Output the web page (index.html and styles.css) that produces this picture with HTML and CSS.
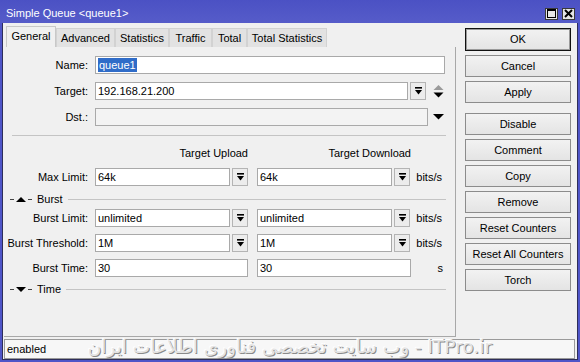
FILE: index.html
```html
<!DOCTYPE html>
<html>
<head>
<meta charset="utf-8">
<link rel="stylesheet" href="styles.css">
</head>
<body>
<div class="window">
  <div class="titlebar">
    <span class="title">Simple Queue &lt;queue1&gt;</span>
    <div class="tbtns">
      <span class="tbtn"><svg width="9" height="9" viewBox="0 0 9 9"><rect x="0.5" y="0.5" width="8" height="8" fill="none" stroke="#000" stroke-width="1"/><rect x="0" y="0" width="9" height="2" fill="#000"/></svg></span>
      <span class="tbtn"><svg width="9" height="9" viewBox="0 0 9 9"><path d="M1 1 L8 8 M8 1 L1 8" stroke="#000" stroke-width="2"/></svg></span>
    </div>
  </div>
  <div class="body">
    <div class="main">
      <div class="left">
        <div class="tabs">
          <span class="tab active t1">General</span>
          <span class="tab t2">Advanced</span>
          <span class="tab t3">Statistics</span>
          <span class="tab t4">Traffic</span>
          <span class="tab t5">Total</span>
          <span class="tab t6">Total Statistics</span>
        </div>
        <div class="panel">
          <div class="row r-first">
            <span class="lbl">Name:</span>
            <div class="inp w-name"><span class="sel">queue1</span></div>
          </div>
          <div class="row r-next">
            <span class="lbl">Target:</span>
            <div class="inp w-target">192.168.21.200</div>
            <span class="dd"><svg width="7" height="8" viewBox="0 0 7 8"><rect x="0" y="0" width="7" height="1.6" fill="#000"/><polygon points="0,3 7,3 3.5,7.5" fill="#000"/></svg></span>
            <span class="updown"><svg width="11" height="13" viewBox="0 0 11 13"><polygon points="0.5,5 10.5,5 5.5,0" fill="#9a9a9a"/><polygon points="0.5,7.5 10.5,7.5 5.5,12.5" fill="#000"/></svg></span>
          </div>
          <div class="row r-next">
            <span class="lbl">Dst.:</span>
            <div class="inp w-dst dim"></div>
            <span class="down"><svg width="11" height="6" viewBox="0 0 11 6"><polygon points="0,0 11,0 5.5,5.5" fill="#000"/></svg></span>
          </div>
          <div class="sep"></div>
          <div class="heads">
            <span class="hcol">Target Upload</span>
            <span class="hcol hdl">Target Download</span>
          </div>
          <div class="row r-max">
            <span class="lbl">Max Limit:</span>
            <div class="grp"><div class="inp w-half">64k</div><span class="dd"><svg width="7" height="8" viewBox="0 0 7 8"><rect x="0" y="0" width="7" height="1.6" fill="#000"/><polygon points="0,3 7,3 3.5,7.5" fill="#000"/></svg></span></div>
            <div class="grp g2"><div class="inp w-half">64k</div><span class="dd"><svg width="7" height="8" viewBox="0 0 7 8"><rect x="0" y="0" width="7" height="1.6" fill="#000"/><polygon points="0,3 7,3 3.5,7.5" fill="#000"/></svg></span></div>
            <span class="unit">bits/s</span>
          </div>
          <div class="section s-burst">
            <svg class="sico" width="22" height="7" viewBox="0 0 22 7"><path d="M0 3.5 H4 M18 3.5 H22" stroke="#444" stroke-width="1"/><polygon points="6,6 16,6 11,1" fill="#000"/></svg>
            <span class="stitle">Burst</span>
            <span class="sline"></span>
          </div>
          <div class="row r-b1">
            <span class="lbl">Burst Limit:</span>
            <div class="grp"><div class="inp w-half">unlimited</div><span class="dd"><svg width="7" height="8" viewBox="0 0 7 8"><rect x="0" y="0" width="7" height="1.6" fill="#000"/><polygon points="0,3 7,3 3.5,7.5" fill="#000"/></svg></span></div>
            <div class="grp g2"><div class="inp w-half">unlimited</div><span class="dd"><svg width="7" height="8" viewBox="0 0 7 8"><rect x="0" y="0" width="7" height="1.6" fill="#000"/><polygon points="0,3 7,3 3.5,7.5" fill="#000"/></svg></span></div>
            <span class="unit">bits/s</span>
          </div>
          <div class="row r-b">
            <span class="lbl">Burst Threshold:</span>
            <div class="grp"><div class="inp w-half">1M</div><span class="dd"><svg width="7" height="8" viewBox="0 0 7 8"><rect x="0" y="0" width="7" height="1.6" fill="#000"/><polygon points="0,3 7,3 3.5,7.5" fill="#000"/></svg></span></div>
            <div class="grp g2"><div class="inp w-half">1M</div><span class="dd"><svg width="7" height="8" viewBox="0 0 7 8"><rect x="0" y="0" width="7" height="1.6" fill="#000"/><polygon points="0,3 7,3 3.5,7.5" fill="#000"/></svg></span></div>
            <span class="unit">bits/s</span>
          </div>
          <div class="row r-b">
            <span class="lbl">Burst Time:</span>
            <div class="grp"><div class="inp w-full">30</div></div>
            <div class="grp g2"><div class="inp w-full2">30</div></div>
            <span class="unit">s</span>
          </div>
          <div class="section s-time">
            <svg class="sico" width="22" height="7" viewBox="0 0 22 7"><path d="M0 3.5 H4 M18 3.5 H22" stroke="#444" stroke-width="1"/><polygon points="6,1 16,1 11,6" fill="#000"/></svg>
            <span class="stitle">Time</span>
            <span class="sline"></span>
          </div>
        </div>
      </div>
      <div class="buttons">
        <span class="btn ok">OK</span>
        <span class="btn">Cancel</span>
        <span class="btn">Apply</span>
        <span class="btn gap">Disable</span>
        <span class="btn">Comment</span>
        <span class="btn">Copy</span>
        <span class="btn">Remove</span>
        <span class="btn">Reset Counters</span>
        <span class="btn">Reset All Counters</span>
        <span class="btn">Torch</span>
      </div>
    </div>
    <div class="status">enabled</div>
  </div>
  <div class="watermark" dir="rtl">ITPro.ir - وب سایت تخصصی فناوری اطلاعات ایران</div>
</div>
</body>
</html>
```
FILE: styles.css
```css
* { box-sizing: border-box; }
body {
  margin: 0;
  font-family: "Liberation Sans", Arial, sans-serif;
  font-size: 11px;
  color: #000;
  background: #fff;
}
.window {
  position: relative;
  width: 580px;
  height: 362px;
  background: #4f55c8;
  display: flex;
  flex-direction: column;
}
.titlebar {
  height: 23px;
  display: flex;
  align-items: center;
  justify-content: space-between;
  padding: 2px 5px 0 6px;
  color: #fff;
  background: linear-gradient(#4b51c4, #565cc9);
}
.title { font-size: 11px; line-height: 14px; }
.tbtns { display: flex; gap: 4px; padding-top: 2px; }
.tbtn {
  width: 13px;
  height: 12px;
  background: #e6e6e6;
  border: 1px solid #3a3a3a;
  display: flex;
  align-items: center;
  justify-content: center;
}
.body {
  flex: 1;
  margin: 0 2px 2px 2px;
  background: #f0f0f0;
  border: 1px solid #2e2e5a;
  border-top: 0;
  display: flex;
  flex-direction: column;
}
.main {
  display: flex;
  height: 314px;
  padding-left: 1px;
}
.left {
  width: 452px;
  display: flex;
  flex-direction: column;
}
.tabs {
  display: flex;
  align-items: flex-end;
  height: 24px;
  padding-left: 2px;
  padding-top: 2px;
}
.tab {
  height: 19px;
  line-height: 18px;
  text-align: center;
  background: #e2e2e2;
  border: 1px solid #d2d2d2;
  border-bottom: 0;
  color: #000;
}
.tab.active {
  height: 21px;
  line-height: 19px;
  background: #f0f0f0;
  border-color: #c8c8c8;
}
.t1 { width: 50px; }
.t2 { width: 59px; }
.t3 { width: 54px; }
.t4 { width: 43px; }
.t5 { width: 35px; }
.t6 { width: 80px; }
.panel {
  flex: 1;
  border-right: 1px solid #a8a8a8;
  border-bottom: 1px solid #a8a8a8;
  padding-top: 9px;
  display: flex;
  flex-direction: column;
}
.row {
  display: flex;
  align-items: center;
  height: 18px;
}
.r-first { margin-top: 0; }
.r-next { margin-top: 8px; }
.r-max { margin-top: 8px; }
.r-b1 { margin-top: 3px; }
.r-b { margin-top: 7px; }
.lbl {
  width: 85px;
  margin-right: 6px;
  text-align: right;
  padding-right: 1px;
  white-space: nowrap;
}
.inp {
  height: 18px;
  line-height: 16px;
  background: #fff;
  border: 1px solid #a9a9a9;
  padding: 0 2px;
  white-space: nowrap;
  overflow: hidden;
}
.inp.dim { background: #f3f3f3; }
.w-name { width: 350px; }
.w-target { width: 313px; }
.w-dst { width: 333px; }
.w-half { width: 135px; }
.w-full { width: 153px; }
.w-full2 { width: 154px; }
.sel {
  background: #2f6cc8;
  color: #fff;
  padding: 0 1px;
  display: inline-block;
  line-height: 14px;
}
.dd {
  width: 16px;
  height: 18px;
  margin-left: 2px;
  background: #ececec;
  border: 1px solid #b4b4b4;
  display: flex;
  align-items: center;
  justify-content: center;
}
.updown { margin-left: 7px; display: flex; }
.down { margin-left: 5px; display: flex; }
.grp { display: flex; align-items: center; }
.g2 { margin-left: 9px; }
.unit {
  width: 28px;
  margin-left: 4px;
  text-align: right;
}
.sep {
  height: 1px;
  background: #c4c4c4;
  margin: 9px 9px 0 8px;
}
.heads {
  display: flex;
  margin-top: 10px;
  height: 14px;
  line-height: 14px;
  padding-left: 91px;
}
.hcol { width: 153px; text-align: right; }
.hdl { width: 154px; margin-left: 9px; }
.section {
  display: flex;
  align-items: center;
  height: 13px;
  padding-left: 6px;
  padding-right: 9px;
}
.s-burst { margin-top: 7px; }
.s-time { margin-top: 6px; }
.sico { display: block; }
.stitle { margin-left: 5px; line-height: 13px; }
.sline {
  flex: 1;
  height: 1px;
  background: #c4c4c4;
  margin-left: 5px;
}
.buttons {
  width: 106px;
  margin-left: 9px;
  padding-top: 5px;
  display: flex;
  flex-direction: column;
  gap: 4px;
}
.btn {
  height: 22px;
  line-height: 20px;
  text-align: center;
  background: linear-gradient(#f2f2f2, #e4e4e4);
  border: 1px solid #8c8c8c;
  white-space: nowrap;
}
.btn.ok {
  height: 23px;
  border: 1px solid #111;
  box-shadow: inset 0 0 0 1px #9a9a9a;
}
.btn.gap { margin-top: 6px; }
.status {
  margin: 2px 2px 0 1px;
  height: 20px;
  line-height: 18px;
  border: 1px solid #9a9a9a;
  background: #f7f7f7;
  padding-left: 2px;
}
.watermark {
  position: absolute;
  left: 60px;
  top: 335px;
  width: 432px;
  height: 24px;
  line-height: 24px;
  font-family: "DejaVu Sans", "Liberation Sans", sans-serif;
  font-size: 18.5px;
  color: #e4e4e4;
  text-shadow: 1px 1px 0 #8a8a8a, -1px -1px 0 #ffffff;
  white-space: nowrap;
  text-align: right;
}
```
